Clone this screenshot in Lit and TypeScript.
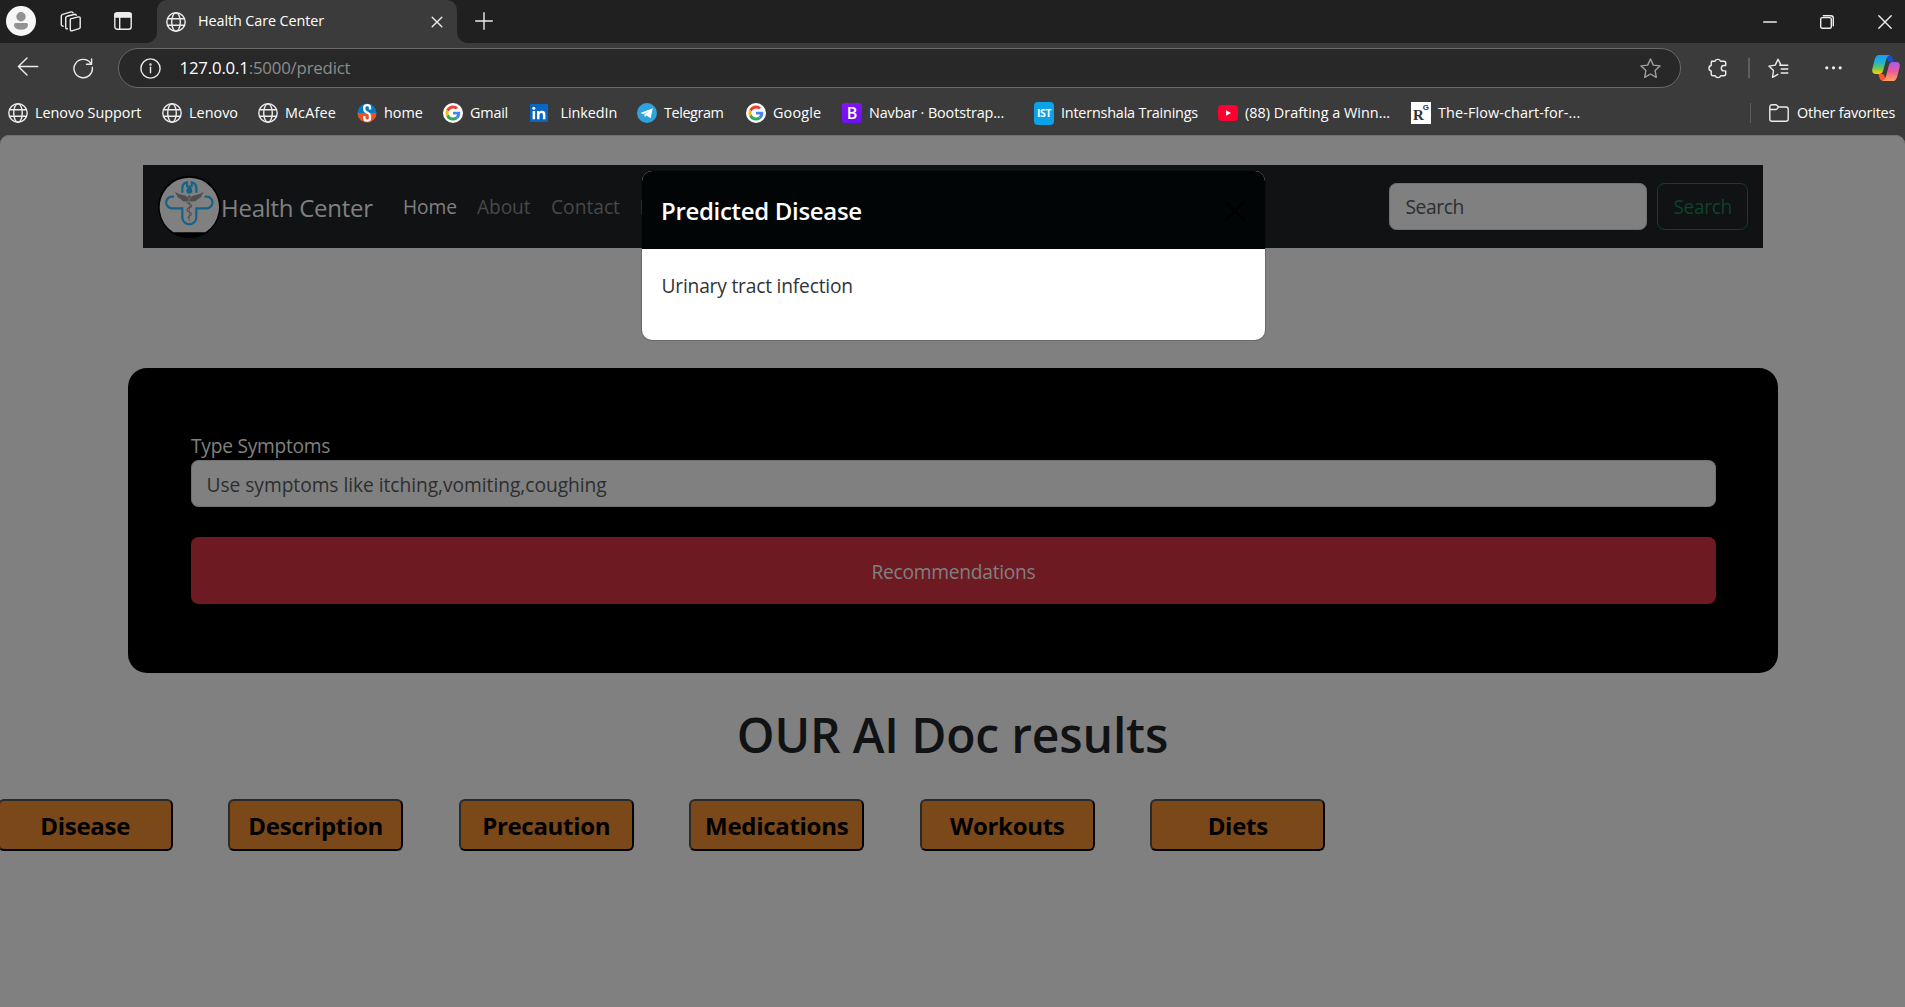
import { LitElement, html, css, TemplateResult } from "lit";
import { customElement } from "lit/decorators.js";

const globe = html`<svg class="ico line" width="20" height="20" viewBox="0 0 20 20">
  <circle cx="10" cy="10" r="9.2" /><ellipse cx="10" cy="10" rx="4.3" ry="9.2" />
  <path d="M1.6 6.8H18.4M1.6 13.2H18.4" />
</svg>`;

const google = html`<svg class="ico" width="20" height="20" viewBox="0 0 60 60">
  <circle cx="30" cy="30" r="30" fill="#fff" />
  <g transform="translate(7.5 7.5) scale(.94)">
    <path fill="#EA4335" d="M24 9.5c3.5 0 6.700 1.200 9.200 3.600l6.900-6.900C35.900 2.400 30.500 0 24 0 14.600 0 6.500 5.400 2.600 13.200l8 6.200C12.400 13.700 17.700 9.500 24 9.500z" />
    <path fill="#4285F4" d="M47 24.600c0-1.600-.2-3.100-.4-4.600H24v9h12.900c-.6 3-2.300 5.500-4.800 7.200l7.700 6C44.400 38 47 31.800 47 24.600z" />
    <path fill="#FBBC05" d="M10.500 28.600c-.5-1.500-.8-3-.8-4.600s.3-3.100.8-4.600l-8-6.200C.9 16.500 0 20.100 0 24s.9 7.500 2.600 10.800z" />
    <path fill="#34A853" d="M24 48c6.500 0 11.900-2.100 15.900-5.800l-7.700-6c-2.200 1.500-4.900 2.300-8.200 2.300-6.300 0-11.600-4.200-13.500-9.900l-8 6.200C6.500 42.600 14.600 48 24 48z" />
  </g>
</svg>`;

const sLogo = html`<svg class="ico" width="20" height="20" viewBox="0 0 20 20">
  <path d="M.5 10a9.500 9.500 0 0 1 19 0z" fill="#0b78bd" /><path d="M.5 10a9.500 9.500 0 0 0 19 0z" fill="#ee5223" />
  <path d="M13 6.400V4.300Q13 2.200 10.200 2.200T7.300 4.400V6.200Q7.300 8.200 9.500 9.200L11 10Q13 11 13 13V15.300Q13 17.700 10.200 17.700T7.300 15.300V13" fill="none" stroke="#fff" stroke-width="2.300" />
</svg>`;

const linkedin = html`<svg class="ico wide" width="18" height="18" viewBox="0 0 18 18">
  <rect width="18" height="18" rx="1" fill="#0a66c2" />
  <path d="M2.600 7h2.500v8.200H2.600zM7 7h2.400v1.100c.5-.8 1.400-1.300 2.700-1.300 2.400 0 3.300 1.400 3.300 3.900v4.500h-2.500v-4c0-1.300-.3-2.200-1.500-2.200s-1.900.9-1.900 2.200v4H7z" fill="#fff" />
  <circle cx="3.800" cy="4.200" r="1.500" fill="#fff" />
</svg>`;

const telegram = html`<svg class="ico" width="20" height="20" viewBox="0 0 20 20">
  <circle cx="10" cy="10" r="10" fill="#2fa3dc" />
  <path d="M3.400 10 15.800 5.200 13.600 15.200 9.600 12.400 7.700 14 7.400 11.300 12.600 7.700 6.300 11.200z" fill="#fff" />
</svg>`;

const bootstrap = html`<span class="ico tile purple">B</span>`;
const ist = html`<span class="ico tile sky">IST</span>`;
const rg = html`<span class="ico tile paper">R<span class="sup">G</span></span>`;
const youtube = html`<svg class="ico" width="20" height="20" viewBox="0 0 20 20">
  <rect y="2" width="20" height="16" rx="4" fill="#ff0033" /><path d="M8 7.200 13 10 8 12.800z" fill="#fff" />
</svg>`;

const copilot = html`<svg width="28" height="26" viewBox="0 0 84 78">
  <defs>
    <linearGradient id="cool" x1="0" y1="0" x2="0" y2="1">
      <stop offset="0" stop-color="#1a9bf0" /><stop offset=".35" stop-color="#20b0d8" /><stop offset=".65" stop-color="#5cc462" /><stop offset="1" stop-color="#ffd000" />
    </linearGradient>
    <linearGradient id="warm" x1="0" y1="0" x2="0" y2="1">
      <stop offset="0" stop-color="#a35cf5" /><stop offset=".5" stop-color="#ee5a96" /><stop offset="1" stop-color="#ffa35e" />
    </linearGradient>
  </defs>
  <path d="M40 0H52Q59 0 61 8L65 21H50Z" fill="#1650d0" />
  <path d="M44 78H32Q25 78 23 70L19 57H34Z" fill="#ff5630" />
  <path d="M20 0H53Q45 3 42 15L33 48Q30 57 22 57H12Q-2 57 1 42L8 14Q12 0 20 0Z" fill="url(#cool)" />
  <path d="M64 78H31Q39 75 42 63L51 30Q54 21 62 21H72Q86 21 83 36L76 64Q72 78 64 78Z" fill="url(#warm)" />
</svg>`;

const bookmarks: [string, TemplateResult, string][] = [
  ["Lenovo Support", globe, "n02"],
  ["Lenovo", globe, "p0"],
  ["McAfee", globe, "p17"],
  ["home", sLogo, "p0"],
  ["Gmail", google, "n28"],
  ["LinkedIn", linkedin, "n06"],
  ["Telegram", telegram, "n40"],
  ["Google", google, "p16"],
  ["Navbar · Bootstrap...", bootstrap, "n12"],
  ["Internshala Trainings", ist, "n25"],
  ["(88) Drafting a Winn...", youtube, "p0"],
  ["The-Flow-chart-for-...", rg, "p12"],
];

@customElement("browser-chrome")
class BrowserChrome extends LitElement {
  static styles = css`
    :host { display: block; background: #3b3b3b; color: #fff; font: 14.4px/20px "Open Sans", "Noto Sans", sans-serif; }
    * { box-sizing: border-box; }
    svg { display: block; }
    .line { fill: none; stroke: #ececec; stroke-width: 1.4; stroke-linecap: round; stroke-linejoin: round; }
    .tabs { display: grid; grid-template-columns: 48px 46px 63px 300px 1fr 57px 58px 27px; height: 43px; background: #202020; align-items: center; }
    .tabs > svg { justify-self: start; }
    .avatar { margin-left: 6px; margin-bottom: 1px; }
    .spaces { margin-left: 12px; margin-bottom: 1px; }
    .panel { margin-left: 20px; margin-bottom: 1px; }
    .tab { position: relative; display: flex; align-items: center; height: 43px; padding: 0 14px 0 9px; background: #3b3b3b; border-radius: 10px 10px 0 0; }
    .tab::before, .tab::after { content: ""; position: absolute; bottom: 0; width: 10px; height: 10px; }
    .tab::before { left: -10px; background: radial-gradient(circle at 0 0, transparent 9.5px, #3b3b3b 10px); }
    .tab::after { right: -10px; background: radial-gradient(circle at 100% 0, transparent 9.5px, #3b3b3b 10px); }
    .title { flex: 1; margin-left: 12px; padding-bottom: 1px; letter-spacing: -0.1px; }
    .plus { margin: 0 0 1px 17.5px; }
    .bar { display: grid; grid-template-columns: 73px 45px 1563px 27px 40px 20px 57px 47px 1fr; height: 50px; align-items: center; }
    .back { margin: 0 0 2px 17px; }
    .url { display: flex; align-items: center; height: 40px; padding: 0 19px 0 21px; border: 1px solid #6a6a6a; border-radius: 20px; background: #282828; font-size: 16.8px; }
    .addr { flex: 1; margin-left: 18.5px; letter-spacing: -0.18px; color: #8c8c8c; }
    .host { color: #fff; }
    .star { stroke: #a0a0a0; }
    .rule { width: 2px; height: 20px; background: #5e5e5e; }
    .dots { fill: #ececec; }
    .marks { display: grid; grid-template-columns: 154px 96px 99px 86px 87px 107px 109px 96px 192px 184px 193px 339px 19px 1fr; height: 42px; padding: 0 0 2px 8px; align-items: center; }
    .mark { display: flex; align-items: center; gap: 7px; white-space: nowrap; }
    .ico { flex: none; }
    .wide { margin-right: 5.5px; }
    .thin { width: 1px; height: 20px; background: #5e5e5e; }
    .tile { width: 20px; height: 20px; border-radius: 3px; text-align: center; }
    .purple { background: linear-gradient(160deg, #8a12f5, #6610f2); font: 600 16px/20px "Open Sans", sans-serif; }
    .sky { height: 23px; border-radius: 4px; background: #0ba2e8; font: 700 10.5px/23px "Open Sans", sans-serif; letter-spacing: -0.4px; }
    .paper { position: relative; padding-right: 5px; border-radius: 0; height: 22px; background: #fff; color: #333; font: 600 15px/26px "Liberation Serif", serif; }
    .sup { position: absolute; right: 2px; top: 2px; font: 700 8px/8px "Liberation Sans", sans-serif; }
    .n02 { letter-spacing: -0.02px; } .p0 { letter-spacing: 0.02px; } .p17 { letter-spacing: 0.17px; }
    .n28 { letter-spacing: -0.2px; } .n06 { letter-spacing: -0.06px; } .n40 { letter-spacing: -0.4px; }
    .p16 { letter-spacing: 0.16px; } .n12 { letter-spacing: -0.12px; } .n25 { letter-spacing: -0.2px; }
    .p12 { letter-spacing: 0.12px; } .n23 { margin-left: 1px; letter-spacing: -0.2px; }
  `;

  render() {
    return html`
      <div class="tabs">
        <svg class="avatar" width="30" height="30" viewBox="0 0 30 30">
          <circle cx="15" cy="15" r="15" fill="#f7f7f7" /><circle cx="15" cy="10.7" r="4.7" fill="#929292" />
          <path d="M9.500 17H20.500Q22 17 22 18.500C22 22 19 23.700 15 23.700S8 22 8 18.500Q8 17 9.500 17z" fill="#929292" />
        </svg>
        <svg class="spaces line" width="21" height="21" viewBox="0 0 21 21">
          <path d="M10.500 7.900 18.400 5.900q1.800-.3 1.800 1.400v9q0 1-1 1.300l-7.300 2.200q-1.600.3-1.600-1.200V9.200q0-1 .2-1.300z" />
          <path d="M7.400 17.800q-1.700.2-1.700-1.300V7q0-1.300 1.300-1.700L15 3.300M3.200 15.200q-1.300 0-1.900-1.500V5.500Q1 4 2.600 3.300L11 .9q1.200-.2 2 .8M15 3.300q1 0 1.300.9" />
        </svg>
        <svg class="panel line" width="18" height="18" viewBox="0 0 18 18">
          <rect x=".8" y=".8" width="16.4" height="16.4" rx="2.5" /><path d="M1 1.500h16v3.600H1z" fill="#ececec" /><path d="M5.700 5V17" />
        </svg>
        <div class="tab">
          ${globe}
          <span class="title">Health Care Center</span>
          <svg class="line" width="12" height="12" viewBox="0 0 12 12"><path d="M1.200 1.200 10.800 10.800M10.800 1.200 1.200 10.800" /></svg>
        </div>
        <svg class="line plus" width="18" height="18" viewBox="0 0 18 18"><path d="M9 .7V17.300M.7 9H17.300" /></svg>
        <svg class="line" width="14" height="14" viewBox="0 0 14 14"><path d="M.7 7H13.300" /></svg>
        <svg class="line" width="14" height="14" viewBox="0 0 14 14"><rect x=".7" y="2.6" width="10.6" height="10.6" rx="1.5" /><path d="M3.300.7H11q2.300 0 2.300 2.300V10.800" /></svg>
        <svg class="line" width="14" height="14" viewBox="0 0 14 14"><path d="M.8.8 13.200 13.200M13.200.8.8 13.200" /></svg>
      </div>
      <div class="bar">
        <svg class="line back" width="22" height="20" viewBox="0 0 22 20"><path d="M10 .9 1.400 9.500 10 18.100M1.400 9.500H20.700" /></svg>
        <svg class="line" width="21" height="21" viewBox="0 0 21 21"><path d="M19.300 9.300A9.200 9.200 0 1 1 17.800 5.400M13.500 6.200H18.600V1" /></svg>
        <div class="url">
          <svg class="line" width="21" height="21" viewBox="0 0 21 21"><circle cx="10.5" cy="10.5" r="9.6" /><path d="M10.500 9.300V14.800" /><circle cx="10.5" cy="6.5" r=".5" /></svg>
          <span class="addr"><span class="host">127.0.0.1</span>:5000/predict</span>
          <svg class="line star" width="21" height="21" viewBox="0 0 21 21"><path d="M10.500 1 13.300 7.100 20 7.900 15.100 12.500 16.300 19.300 10.500 16 4.700 19.300 5.900 12.500 1 7.900 7.700 7.100z" /></svg>
        </div>
        <span></span>
        <svg class="line" width="19" height="21" viewBox="0 0 19 21">
          <path d="M3.400 3.300H7A3 3 0 0 1 12.600 3.300H15.800Q17.700 3.300 17.700 5V7.500H16A2.700 2.700 0 0 0 16 12.900H17.700V15.800Q17.700 17.700 15.800 17.700H12.800A3 3 0 0 1 7.200 17.700H5Q3.200 17.700 3.200 15.800V12.900A2.750 2.750 0 0 1 3.200 7.500V5Q3.200 3.300 5 3.300" />
        </svg>
        <span class="rule"></span>
        <svg class="line" width="21" height="21" viewBox="0 0 21 21">
          <path d="M18.500 7.400 13 7.100 10 1.200 7.200 7.100 .9 8.100 5.500 12.500 4.500 19.300 9.800 16.400M13.200 11H19.800M13.200 15H19.800M11.800 7.200H19.800" />
        </svg>
        <svg class="dots" width="17" height="6" viewBox="0 0 17 6"><circle cx="1.8" cy="2.800" r="1.600" /><circle cx="8.500" cy="2.800" r="1.600" /><circle cx="15.200" cy="2.800" r="1.600" /></svg>
        ${copilot}
      </div>
      <div class="marks">
        ${bookmarks.map(([label, icon, ls]) => html`<div class="mark">${icon}<span class=${ls}>${label}</span></div>`)}
        <span class="thin"></span>
        <div class="mark">
          <svg class="line ico" width="20" height="18" viewBox="0 0 20 18"><path d="M.8 3.200Q.8.800 3 .800H6.600Q7.500.800 8.200 1.600L9.500 3H17Q19.200 3 19.200 5.200V15Q19.200 17.200 17 17.200H3Q.8 17.200.8 15zM.8 5.500H6.500Q7.500 5.500 8.200 4.700L9.500 3" /></svg>
          <span class="n23">Other favorites</span>
        </div>
      </div>`;
  }
}

@customElement("app-root")
class AppRoot extends LitElement {
  static styles = css`
    :host { display: flex; flex-direction: column; height: 100vh; overflow: hidden; background: #3b3b3b; font: 19.2px/30px "Open Sans", "Noto Sans", sans-serif; }
    * { box-sizing: border-box; }
    svg { display: block; }
    .page { position: relative; flex: 1; padding-top: 30px; overflow: hidden; background: #808080; border-radius: 9px 9px 0 0; box-shadow: inset 0 1px #727272; }
    .nav { display: flex; align-items: center; height: 83px; width: 1620px; margin-left: 143px; padding: 0 15px 0 14px; background: #101214; color: #47494a; }
    .brand { margin: 2px 0 0 0; width: 182px; font-size: 24px; letter-spacing: -0.26px; color: #808080; white-space: nowrap; }
    .links { display: flex; flex: 1; }
    .home { width: 74px; color: #808080; letter-spacing: -0.08px; }
    .about { width: 74px; letter-spacing: -0.12px; }
    .contact { width: 88.5px; }
    .search { width: 258px; height: 47px; margin-right: 10px; padding: 7.5px 15.5px; border: 1px solid #6f7173; border-radius: 7.5px; background: #808080; color: #2c2e30; letter-spacing: -0.4px; }
    .go { width: 91px; height: 47px; padding: 7.5px 0 7.5px 15.5px; border: 1px solid #0c432a; border-radius: 7.5px; color: #0c432a; letter-spacing: -0.4px; }
    .panel { width: 1650px; height: 305px; margin: 120px 0 0 128px; padding: 62.5px 62px 0 63px; border-radius: 19px; background: #000; }
    .label { color: #808080; letter-spacing: -0.26px; height: 29.5px; }
    .field { height: 47px; padding: 9px 14.5px 0; border: 1px solid #6f7173; border-radius: 7.5px; background: #808080; color: #2c2e30; letter-spacing: -0.04px; }
    .submit { height: 67px; margin-top: 30px; padding-top: 19.5px; border-radius: 7.5px; background: #6e1a22; color: #808080; text-align: center; letter-spacing: -0.27px; }
    h1 { margin: 32px 0 34px; font-size: 48px; line-height: 60px; font-weight: 600; text-align: center; color: #101214; letter-spacing: -0.16px; }
    .results { display: grid; grid-template-columns: repeat(6, 175px); column-gap: 55.5px; margin-left: -2.3px; }
    .chip { height: 52px; padding-top: 9.5px; border: 2px solid; border-color: #2a2a2a #000 #000 #2a2a2a; border-radius: 6px; background: #7a4819; color: #000; font-weight: 700; font-size: 24px; text-align: center; letter-spacing: -0.3px; }
    .modal { position: absolute; left: 642px; top: 36px; width: 623px; height: 169px; overflow: hidden; border-radius: 10px; background: #fff; box-shadow: 0 0 0 1px rgba(0, 0, 0, 0.18); }
    .head { display: flex; align-items: center; justify-content: space-between; height: 78px; padding: 1px 20px 0 19px; background: #010506; color: #fff; font-size: 24px; font-weight: 600; letter-spacing: -0.32px; }
    .body { padding: 22px 19.5px; color: #303438; letter-spacing: -0.2px; }
  `;

  render() {
    return html`
      <browser-chrome></browser-chrome>
      <div class="page">
        <div class="nav">
          <svg width="64" height="64" viewBox="21 29 192 192">
            <circle cx="118" cy="125" r="94" fill="#000" />
            <path d="M70 201A89 89 0 1 1 166 201z" fill="#808080" />
            <g fill="none" stroke="#12638a" stroke-width="6.5">
              <path d="M72 94H66a17.500 17.500 0 0 0 0 35H97V156a21 21 0 0 0 42 0V129H170a17.500 17.500 0 0 0 0-35H164" />
              <path d="M97 82V70Q97 53 111 51V66M139 82V70Q139 53 125 51V66" />
            </g>
            <path d="M118 58Q109 70 109 76A9 9 0 0 0 127 76Q127 70 118 58z" fill="#12638a" />
            <path d="M116 108Q98 111 92 101Q82 98 81 90Q76 86 76 80Q90 90 102 90Q113 92 116 101zM120 108Q138 111 144 101Q154 98 155 90Q160 86 160 80Q146 90 134 90Q123 92 120 101z" fill="#4e4e4e" />
            <path d="M118 92V168" stroke="#555" stroke-width="2.5" />
            <path d="M110 112Q128 116 124 124Q108 130 112 137Q128 142 123 149Q112 154 116 160" fill="none" stroke="#505050" stroke-width="3.5" />
            <circle cx="118" cy="94" r="4" fill="#505050" />
          </svg>
          <span class="brand">Health Center</span>
          <div class="links">
            <span class="home">Home</span><span class="about">About</span><span class="contact">Contact</span><span>D</span>
          </div>
          <div class="search">Search</div>
          <div class="go">Search</div>
        </div>
        <div class="panel">
          <div class="label">Type Symptoms</div>
          <div class="field">Use symptoms like itching,vomiting,coughing</div>
          <div class="submit">Recommendations</div>
        </div>
        <h1>OUR AI Doc results</h1>
        <div class="results">
          ${["Disease", "Description", "Precaution", "Medications", "Workouts", "Diets"].map((t) => html`<div class="chip">${t}</div>`)}
        </div>
        <div class="modal">
          <div class="head">
            Predicted Disease
            <svg width="20" height="20" viewBox="0 0 20 20"><path d="M1 1 19 19M19 1 1 19" stroke="#000" stroke-width="2.5" stroke-linecap="round" /></svg>
          </div>
          <div class="body">Urinary tract infection</div>
        </div>
      </div>`;
  }
}
